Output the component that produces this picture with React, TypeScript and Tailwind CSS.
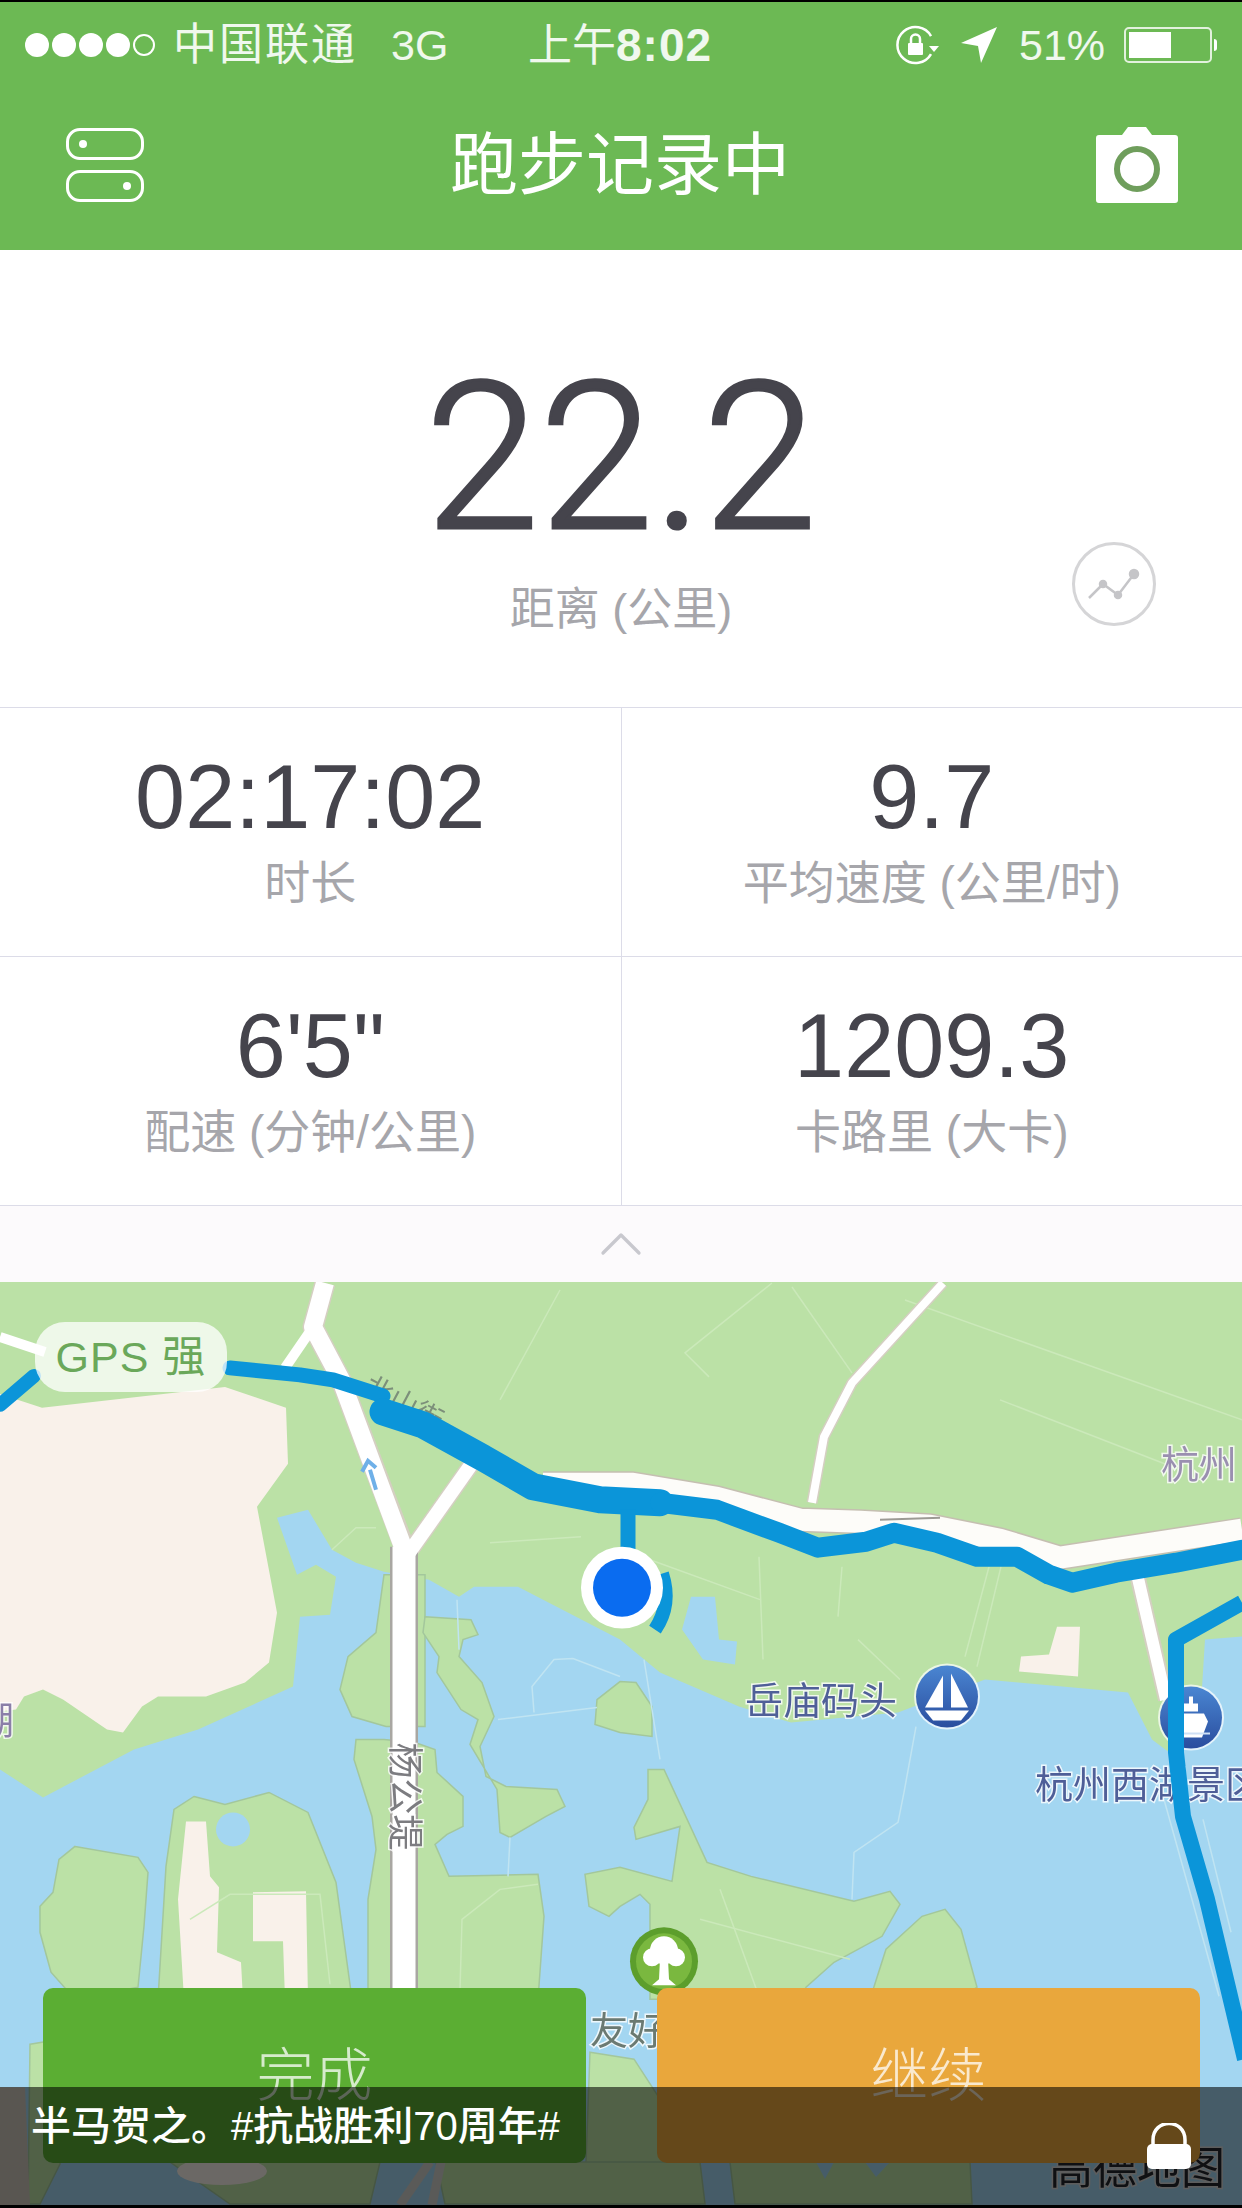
import { ChevronUp } from "lucide-react";

const land = "#bbe1a6";
const water = "#a3d6f1";
const beige = "#f9f1ea";
const route = "#0b95d9";

// outlines traced in page pixels
const islands = [
  "75,1847 138,1858 148,1873 144,1927 138,1988 75,2000 51,1973 40,1933 40,1907 53,1893 59,1860",
  "194,1797 225,1805 269,1793 308,1813 336,1883 352,2000 158,2000 166,1867 174,1810",
  "384,1575 425,1575 425,1727 386,1727 352,1717 340,1690 348,1657 376,1633",
  "425,1617 471,1620 478,1635 463,1640 459,1657 482,1683 494,1717 480,1747 486,1777 506,1787 557,1790 565,1807 546,1817 510,1838 500,1833 497,1790 470,1745 478,1720 461,1710 437,1673 439,1657 423,1633",
  "356,1740 384,1740 415,1743 435,1750 437,1773 463,1797 463,1827 447,1835 435,1845 449,1877 538,1875 544,1917 538,2000 368,2000 368,1900 376,1850 372,1817 354,1760",
  "597,1700 620,1682 636,1683 652,1707 652,1737 620,1733 595,1725",
  "648,1770 664,1770 707,1863 751,1877 854,1902 890,1892 900,1905 882,1937 834,1963 806,1988 800,2000 650,2000 650,1905 640,1895 620,1907 609,1917 589,1907 585,1875 620,1868 672,1882 680,1827 636,1840 634,1828 648,1800",
  "945,1910 961,1930 977,1988 960,2000 870,2000 886,1950 922,1917",
  "590,2053 634,2060 660,2100 700,2163 700,2205 590,2205 586,2163",
  "30,2045 60,2040 60,2165 40,2205 28,2205",
  "170,2163 380,2163 370,2205 230,2205",
  "436,2163 700,2163 705,2205 445,2205",
  "730,2163 970,2163 972,2205 735,2205",
];

const landLines = [
  "M759 1557 L763 1660",
  "M842 1567 L838 1617",
  "M989 1567 L965 1657",
  "M1001 1567 L977 1667",
  "M490 1543 L581 1537",
  "M332 1550 L356 1528 L376 1528",
  "M650 1560 L760 1600",
  "M858 1640 L900 1680",
  "M772 1283 L685 1353 L709 1377",
  "M792 1287 L852 1373",
  "M905 1300 L1242 1420",
  "M1000 1400 L1180 1470",
  "M560 1290 L500 1400",
  "M700 1920 L850 1960",
  "M720 1890 L760 2000",
  "M190 1920 L230 1895 L320 1895 L330 1985",
  "M460 1990 L462 1920 L500 1890 L538 1885",
];

const lakeLines = [
  "M498 1720 L597 1708",
  "M534 1713 L532 1687 L554 1660 L573 1659 L620 1677",
  "M457 1600 L459 1650",
  "M510 1838 L508 1877",
  "M916 1727 L904 1793 L898 1823 L854 1853 L852 1900",
  "M644 1660 L660 1760",
  "M1164 1800 L1219 1997",
  "M1203 1820 L1231 1933",
];

function MapLayer() {
  return (
    <svg viewBox="0 1282 1242 924" className="absolute inset-0 h-full w-full blur-[0.7px]" preserveAspectRatio="none">
      <defs>
        <linearGradient id="pin" x1="0" y1="0" x2="0" y2="1">
          <stop offset="0" stopColor="#4a86d2" />
          <stop offset="1" stopColor="#2a4d9e" />
        </linearGradient>
      </defs>
      <rect x="0" y="1282" width="1242" height="924" fill={land} />
      {/* lake */}
      <polygon
        fill={water}
        points="0,1770 43,1798 134,1750 198,1730 293,1687 300,1617 330,1615 336,1577 316,1565 297,1575 277,1518 308,1510 332,1550 356,1563 384,1572 429,1580 459,1597 474,1587 518,1587 620,1640 660,1673 739,1707 791,1723 898,1713 985,1680 1128,1693 1152,1740 1172,1755 1200,1720 1205,1640 1242,1637 1242,2206 0,2206"
      />
      <polygon fill={water} points="691,1597 715,1597 719,1640 737,1642 735,1665 703,1660 682,1630" />
      {islands.map((points) => (
        <polygon key={points} points={points} fill={land} stroke="#a3c79c" strokeWidth="1.5" />
      ))}
      {/* built up areas */}
      <polygon
        fill={beige}
        points="0,1394 42,1408 225,1387 286,1408 288,1464 257,1507 277,1613 269,1663 245,1683 206,1697 158,1697 142,1707 123,1733 107,1730 63,1700 43,1690 24,1697 16,1710 0,1712"
      />
      <polygon fill={beige} points="186,1822 206,1822 210,1877 219,1888 217,1953 241,1963 243,2000 184,2000 178,1900" />
      <polygon fill={beige} points="253,1893 306,1892 308,2000 285,2000 283,1942 253,1942" />
      <polygon fill={beige} points="1049,1655 1057,1627 1080,1627 1078,1677 1019,1672 1021,1657" />
      <polygon fill="#cfc7bb" points="0,2088 25,2088 30,2206 0,2206" />
      <ellipse cx="222" cy="2172" rx="45" ry="14" fill={beige} />
      <circle cx="233" cy="1830" r="17" fill={water} />
      <polygon fill={water} points="816,2163 834,2163 825,2180" />
      <polygon fill={water} points="865,2163 890,2163 876,2178" />
      <g fill="none" stroke="#cbe9ba" strokeWidth="1.5">
        {landLines.map((d) => (
          <path key={d} d={d} />
        ))}
      </g>
      <g fill="none" stroke="#c0e4f2" strokeWidth="1.5">
        {lakeLines.map((d) => (
          <path key={d} d={d} />
        ))}
      </g>
      {/* roads */}
      <g fill="none" strokeLinejoin="round">
        <path d="M325 1283 L313 1327 L341 1380 L404 1547" stroke="#d5cfc2" strokeWidth="21" />
        <path d="M476 1458 L404 1560" stroke="#d5cfc2" strokeWidth="17" />
        <path d="M404 1547 L404 1990" stroke="#a9a7a2" strokeWidth="28" />
        <path d="M404 1547 L404 1990" stroke="#ffffff" strokeWidth="23" />
        <path d="M325 1283 L313 1327 L341 1380 L404 1550" stroke="#ffffff" strokeWidth="18" />
        <path d="M476 1458 L404 1560" stroke="#ffffff" strokeWidth="14" />
        <path d="M313 1327 L285 1368" stroke="#ffffff" strokeWidth="10" />
        <path d="M0 1337 L45 1352" stroke="#ffffff" strokeWidth="10" />
        <path d="M943 1283 L852 1383 L824 1437 L812 1503" stroke="#d5cfc2" strokeWidth="11" />
        <path d="M943 1283 L852 1383 L824 1437 L812 1503" stroke="#ffffff" strokeWidth="8" />
        <path d="M1136 1570 L1166 1700" stroke="#d5cfc2" strokeWidth="16" />
        <path d="M1136 1570 L1166 1700" stroke="#ffffff" strokeWidth="12" />
        <path d="M400 2206 L430 2163 M432 2206 L441 2163" stroke="#d0d0cc" strokeWidth="9" />
        <path
          d="M543 1484 L633 1484 L717 1498 L800 1520 L860 1522 L930 1526 L1000 1540 L1060 1558 L1242 1530"
          stroke="#c5bfb1"
          strokeWidth="25"
        />
        <path
          d="M543 1484 L633 1484 L717 1498 L800 1520 L860 1522 L930 1526 L1000 1540 L1060 1558 L1242 1530"
          stroke="#fdfcf9"
          strokeWidth="22"
        />
        <path d="M880 1520 L940 1518" stroke="#9c9a94" strokeWidth="2" />
      </g>
      <path d="M370 1470 L376 1490 M362 1472 L368 1461 L376 1468" fill="none" stroke="#6fb0e8" strokeWidth="4" />
      {/* markers */}
      <circle cx="947" cy="1697" r="33" fill="#ffffff" opacity="0.7" />
      <circle cx="947" cy="1697" r="31" fill="url(#pin)" />
      <path d="M943 1676 L943 1708 L925 1708 Z M951 1674 L968 1708 L951 1708 Z" fill="#ffffff" />
      <path d="M925 1711 L969 1711 L961 1721 L933 1721 Z" fill="#ffffff" />
      <circle cx="1191" cy="1718" r="33" fill="#ffffff" opacity="0.7" />
      <circle cx="1191" cy="1718" r="31" fill="url(#pin)" />
      <path
        d="M1178 1714 L1204 1714 L1208 1722 L1202 1738 L1180 1738 L1174 1722 Z M1184 1704 L1198 1704 L1198 1712 L1184 1712 Z M1189 1697 L1193 1697 L1193 1704 L1189 1704 Z"
        fill="#ffffff"
      />
      <rect x="1172" y="1733" width="38" height="2" fill="#cfe0f5" />
      <circle cx="664" cy="1962" r="34" fill="#5c9e2c" />
      <circle cx="664" cy="1962" r="28" fill="#7ab83f" />
      <circle cx="664" cy="1951" r="14" fill="#ffffff" />
      <circle cx="652" cy="1958" r="9" fill="#ffffff" />
      <circle cx="676" cy="1958" r="9" fill="#ffffff" />
      <path d="M660 1960 L668 1960 L669 1980 L676 1986 L652 1986 L659 1980 Z" fill="#ffffff" />
      {/* labels */}
      <g fontSize="38" stroke="#ffffff" strokeOpacity="0.8" strokeWidth="3" paintOrder="stroke">
        <text x="745" y="1714" fill="#4f5f98">岳庙码头</text>
        <text x="1035" y="1799" fill="#4f5f98">杭州西湖景区</text>
        <text x="1161" y="1478" fill="#9a8fb0">杭州</text>
        <text x="-24" y="1735" fill="#8b7fa8">湖</text>
        <text x="590" y="2045" fill="#6b7a72">友好</text>
      </g>
      <text fontSize="36" fill="#7c7c80" stroke="#ffffff" strokeOpacity="0.8" strokeWidth="3" paintOrder="stroke" transform="translate(392 1743) rotate(90)">
        杨公堤
      </text>
      <text fontSize="28" fill="#7c8f7a" transform="translate(362 1392) rotate(28)">
        北山街
      </text>
      <text x="1049" y="2185" fontSize="44" fill="#23272d" stroke="#d8d8d8" strokeWidth="3" paintOrder="stroke">
        高德地图
      </text>
      {/* route */}
      <g fill="none" stroke={route} strokeLinejoin="round" strokeLinecap="round">
        <path d="M0 1405 L34 1376" strokeWidth="14" />
        <path d="M230 1368 L300 1375 L333 1380 L383 1396" strokeWidth="15" />
        <path d="M383 1412 L423 1425 L483 1458 L533 1487 L600 1500 L660 1503" strokeWidth="27" />
        <path
          d="M660 1503 L717 1510 L779 1533 L818 1548 L866 1542 L894 1533 L937 1543 L977 1557 L1017 1557 L1049 1575 L1072 1583 L1116 1573 L1176 1563 L1242 1550"
          strokeWidth="20"
        />
        <path d="M628 1510 L628 1550" strokeWidth="15" strokeLinecap="butt" />
        <path d="M662 1574 Q672 1605 655 1630" strokeWidth="14" strokeLinecap="butt" />
        <path d="M1242 1603 L1176 1640 L1176 1753 L1183 1817 L1207 1900 L1245 2060" strokeWidth="16" strokeLinecap="butt" />
      </g>
      <circle cx="622" cy="1588" r="41" fill="#ffffff" />
      <circle cx="622" cy="1588" r="29" fill="#0a6cf0" />
    </svg>
  );
}

function Stat({ value, label }: { value: string; label: string }) {
  return (
    <div className="flex h-[248px] flex-col items-center justify-center bg-white">
      <div className="-mt-[4px] text-[90px] leading-[100px] text-[#45444c]">{value}</div>
      <div className="mt-[6px] text-[46px] leading-[60px] text-[#a6a6ab]">{label}</div>
    </div>
  );
}

export default function App() {
  return (
    <div className="flex h-[2208px] w-[1242px] flex-col overflow-hidden bg-black pt-[2px] pb-[3px] font-['Liberation_Sans','Noto_Sans_CJK_SC',sans-serif]">
      {/* status bar + title */}
      <div className="h-[248px] shrink-0 bg-[#6cb954] text-white">
        <div className="flex h-[84px] items-center pl-[25px] pt-[2px] text-[44px] leading-none text-white/90">
          <div className="flex items-center gap-[3px]">
            <span className="h-[24px] w-[24px] rounded-full bg-white" />
            <span className="h-[24px] w-[24px] rounded-full bg-white" />
            <span className="h-[24px] w-[24px] rounded-full bg-white" />
            <span className="h-[24px] w-[24px] rounded-full bg-white" />
            <span className="h-[22px] w-[22px] rounded-full border-2 border-white" />
          </div>
          <span className="ml-[18px] w-[218px] tracking-[2px]">中国联通</span>
          <span className="w-[137px] text-[43px]">3G</span>
          <span className="w-[365px] whitespace-nowrap">
            上午<span className="text-[46px] font-bold tracking-[1px]">8:02</span>
          </span>
          <svg viewBox="0 0 46 46" className="h-[46px] w-[46px]" fill="none" stroke="white" strokeWidth="2.5">
            <path d="M38 14 A18 18 0 1 0 38 32" />
            <path d="M36 24 L46 24 L41 30 Z" fill="white" stroke="none" />
            <rect x="15" y="21" width="15" height="12" rx="1" fill="white" stroke="none" />
            <path d="M18 21 V17 a4.5 4.5 0 0 1 9 0 V21" />
          </svg>
          <svg viewBox="0 0 36 36" className="ml-[22px] h-[36px] w-[36px]" fill="white">
            <path d="M36 0 L20 36 L17 19 L0 16 Z" />
          </svg>
          <span className="ml-[22px] text-[43px]">51%</span>
          <div className="ml-[19px] flex items-center">
            <div className="h-[36px] w-[88px] rounded-[5px] border-2 border-white/80 p-[3px]">
              <div className="h-full w-[42px] bg-white" />
            </div>
            <span className="ml-[2px] h-[12px] w-[3px] rounded-r bg-white" />
          </div>
        </div>
        <div className="flex h-[164px] items-center justify-between pl-[66px] pr-[64px] pb-[6px]">
          <div className="flex flex-col gap-[10px]">
            <div className="flex h-[32px] w-[78px] items-center rounded-[14px] border-[3px] border-white pl-[10px]">
              <span className="h-[8px] w-[8px] rounded-full bg-white" />
            </div>
            <div className="flex h-[32px] w-[78px] items-center justify-end rounded-[14px] border-[3px] border-white pr-[10px]">
              <span className="h-[8px] w-[8px] rounded-full bg-white" />
            </div>
          </div>
          <div className="text-[68px] leading-none">跑步记录中</div>
          <svg viewBox="0 0 82 76" className="h-[76px] w-[82px]">
            <path
              d="M26 8 L32 0 L50 0 L56 8 L79 8 Q82 8 82 11 L82 73 Q82 76 79 76 L3 76 Q0 76 0 73 L0 11 Q0 8 3 8 Z"
              fill="white"
            />
            <circle cx="41" cy="42" r="20" fill="white" stroke="#6f9e5c" strokeWidth="6" />
          </svg>
        </div>
      </div>

      {/* distance */}
      <div className="relative flex h-[457px] shrink-0 flex-col items-center bg-white">
        <div className="mt-[102px] font-['Roboto'] text-[206px] leading-[212px] font-light text-[#45444c] [-webkit-text-stroke:3px_#45444c]">
          22.2
        </div>
        <div className="mt-[16px] text-[45px] leading-[60px] text-[#a6a6ab]">距离 (公里)</div>
        <div className="absolute top-[292px] right-[86px] flex h-[84px] w-[84px] items-center justify-center rounded-full border-[3px] border-[#d5d5d7]">
          <svg viewBox="0 0 54 36" className="h-[36px] w-[54px]" fill="#c5c5c8" stroke="#c5c5c8" strokeWidth="2.5">
            <path d="M2 32 L16 18 L31 29 L47 8" fill="none" />
            <circle cx="16" cy="18" r="3" />
            <circle cx="31" cy="29" r="3" />
            <circle cx="47" cy="8" r="4" />
          </svg>
        </div>
      </div>

      {/* stats */}
      <div className="grid shrink-0 grid-cols-2 gap-px border-y border-[#dcdce8] bg-[#dcdce8]">
        <Stat value="02:17:02" label="时长" />
        <Stat value="9.7" label="平均速度 (公里/时)" />
        <Stat value={`6'5"`} label="配速 (分钟/公里)" />
        <Stat value="1209.3" label="卡路里 (大卡)" />
      </div>

      {/* collapse strip */}
      <div className="flex h-[76px] shrink-0 items-center justify-center bg-[#fcfafc]">
        <ChevronUp className="h-[72px] w-[72px] text-[#c8c8ce]" strokeWidth={1.1} />
      </div>

      {/* map */}
      <div className="relative min-h-0 flex-1 overflow-hidden">
        <MapLayer />
        <div className="absolute top-[40px] left-[35px] flex h-[70px] w-[192px] items-center justify-center rounded-[30px] bg-white/75 text-[43px] tracking-[1px] text-[#6aa85a]">
          GPS 强
        </div>
        <div className="absolute top-[706px] right-[42px] left-[43px] flex gap-[71px]">
          <button className="flex h-[175px] flex-1 items-center justify-center rounded-[10px] bg-[#5bae33] text-[58px] font-light text-white/75">
            完成
          </button>
          <button className="flex h-[175px] flex-1 items-center justify-center rounded-[10px] bg-[#e9a73c] text-[58px] font-light text-white/75">
            继续
          </button>
        </div>
        <div className="absolute inset-x-0 bottom-0 flex h-[118px] items-start justify-between bg-black/[.57] pl-[31px] pr-[51px]">
          <div className="mt-[14px] text-[40px] leading-[50px] font-medium text-white">半马贺之。#抗战胜利70周年#</div>
          <svg viewBox="0 0 44 46" className="mt-[36px] h-[46px] w-[44px]" fill="white">
            <path d="M6 24 V17 C6 -5 38 -5 38 17 V24" fill="none" stroke="white" strokeWidth="3.5" />
            <rect x="0" y="21" width="44" height="25" rx="5" />
          </svg>
        </div>
      </div>
    </div>
  );
}
